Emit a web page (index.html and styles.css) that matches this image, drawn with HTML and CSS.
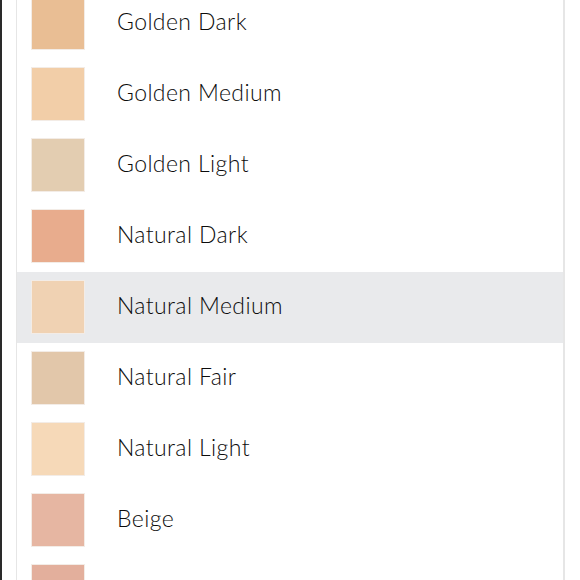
FILE: index.html
```html
<!DOCTYPE html>
<html>
<head>
<meta charset="utf-8">
<link rel="stylesheet" href="styles.css">
</head>
<body>
<div class="frame">
  <ul class="shades">
    <li class="shade"><span class="swatch golden-dark"></span><span class="name">Golden Dark</span></li>
    <li class="shade"><span class="swatch golden-medium"></span><span class="name">Golden Medium</span></li>
    <li class="shade"><span class="swatch golden-light"></span><span class="name">Golden Light</span></li>
    <li class="shade"><span class="swatch natural-dark"></span><span class="name">Natural Dark</span></li>
    <li class="shade active"><span class="swatch natural-medium"></span><span class="name">Natural Medium</span></li>
    <li class="shade"><span class="swatch natural-fair"></span><span class="name">Natural Fair</span></li>
    <li class="shade"><span class="swatch natural-light"></span><span class="name">Natural Light</span></li>
    <li class="shade"><span class="swatch beige"></span><span class="name">Beige</span></li>
    <li class="shade"><span class="swatch rose"></span></li>
  </ul>
</div>
</body>
</html>
```
FILE: styles.css
```css
html, body {
  margin: 0;
  padding: 0;
  height: 580px;
  overflow: hidden;
  background: #fff;
}
.frame {
  display: flow-root;
  height: 580px;
  border-left: 2px solid #2a2a2a;
  padding-left: 14px;
  box-sizing: border-box;
  overflow: hidden;
}
.shades {
  list-style: none;
  margin: -12px 0 0 0;
  padding: 0;
  width: 549px;
  box-sizing: border-box;
  border-left: 1px solid #e6e6e6;
  border-right: 2px solid #e6e6e6;
}
.shade {
  height: 71px;
  display: flex;
  align-items: flex-start;
  padding: 8px 0 0 14px;
  box-sizing: border-box;
}
.shade.active {
  background: #e9eaec;
}
.swatch {
  width: 54px;
  height: 54px;
  flex: none;
  box-sizing: border-box;
  border: 1px solid #f3ece6;
}
.name {
  margin-left: 32px;
  align-self: center;
  margin-top: -14px;
  font-family: Lato, "Noto Sans", sans-serif;
  font-weight: 300;
  font-size: 23px;
  color: #0c0c0c;
  letter-spacing: 0.4px;
}
.golden-dark { background: #e9be94; }
.golden-medium { background: #f2cea8; }
.golden-light { background: #e3cdb1; }
.natural-dark { background: #e8ac8d; }
.natural-medium { background: #f0d2b3; }
.natural-fair { background: #e2c7aa; }
.natural-light { background: #f6d9b8; }
.beige { background: #e6b6a2; }
.rose { background: #e3af9c; }
```
